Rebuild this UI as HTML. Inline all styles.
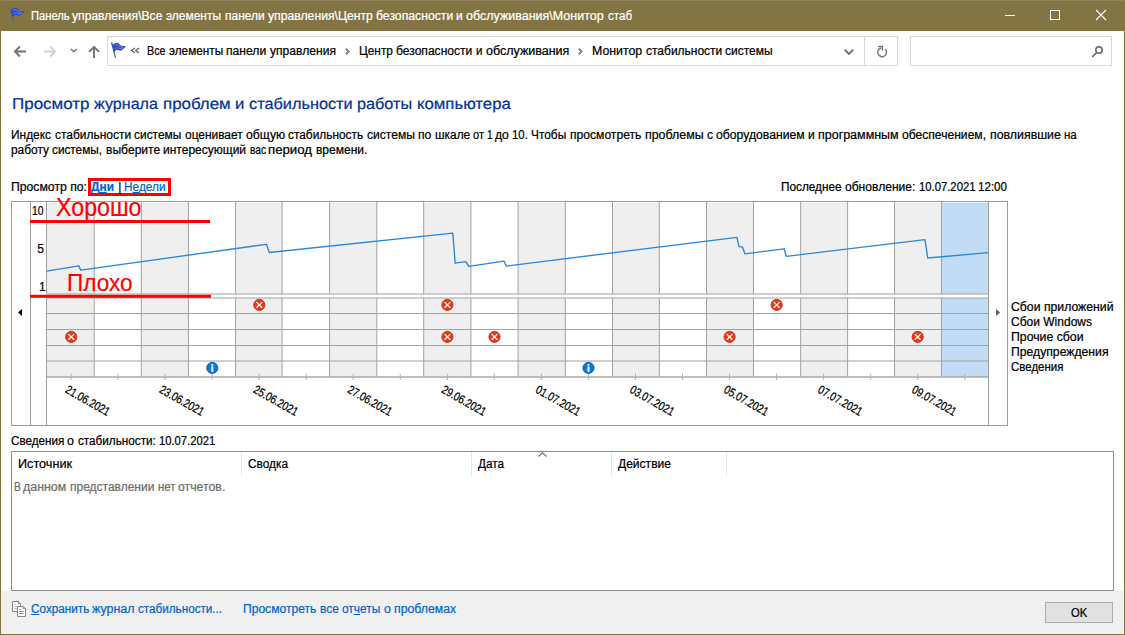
<!DOCTYPE html>
<html lang="ru"><head><meta charset="utf-8"><title>Монитор стабильности системы</title>
<style>
html,body{margin:0;padding:0;}
body{width:1125px;height:635px;overflow:hidden;background:#fff;font-family:"Liberation Sans", sans-serif;font-size:12px;position:relative;}
.abs{position:absolute;box-sizing:border-box;}
.t{position:absolute;white-space:nowrap;transform-origin:0 0;display:block;-webkit-text-stroke:0.22px currentColor;}
.t u{text-decoration-thickness:1px;text-underline-offset:1px;}
#win{left:0;top:0;width:1125px;height:635px;border:1px solid #85743f;border-top:none;}
#titlebar{left:0;top:0;width:1125px;height:31px;background:#837443;border-top:1px solid #91835a;}
#addr{left:107px;top:36px;width:791px;height:30px;border:1px solid #d9d9d9;background:#fff;}
#addrsep{left:864px;top:37px;width:1px;height:28px;background:#d9d9d9;}
#search{left:910px;top:36px;width:202px;height:30px;border:1px solid #d9d9d9;background:#fff;}
#list{left:11px;top:451px;width:1103px;height:140px;border:1px solid #8e8e8e;background:#fff;}
.hs{position:absolute;top:452px;width:1px;height:24px;background:#e5e5e5;}
#footer{left:1px;top:591px;width:1123px;height:43px;background:#f0f0f0;}
#okbtn{left:1045px;top:602px;width:68px;height:21px;border:1px solid #adadad;background:#e1e1e1;}
</style></head>
<body>
<div class="abs" id="titlebar"></div>
<div class="abs" id="addr"></div><div class="abs" id="addrsep"></div>
<div class="abs" id="search"></div>
<div class="abs" id="list"></div>
<div class="hs" style="left:241px"></div><div class="hs" style="left:471px"></div><div class="hs" style="left:611px"></div><div class="hs" style="left:726px"></div>
<div class="abs" id="footer"></div>
<div class="abs" id="okbtn"></div>
<svg id="chart" width="1125" height="635" viewBox="0 0 1125 635" style="position:absolute;left:0;top:0">
<rect x="46.50" y="202.6" width="47.70" height="174.4" fill="#efefef"/>
<rect x="141.30" y="202.6" width="47.10" height="174.4" fill="#efefef"/>
<rect x="235.60" y="202.6" width="46.50" height="174.4" fill="#efefef"/>
<rect x="329.60" y="202.6" width="47.20" height="174.4" fill="#efefef"/>
<rect x="423.70" y="202.6" width="47.20" height="174.4" fill="#efefef"/>
<rect x="518.10" y="202.6" width="47.20" height="174.4" fill="#efefef"/>
<rect x="612.50" y="202.6" width="46.80" height="174.4" fill="#efefef"/>
<rect x="706.50" y="202.6" width="47.00" height="174.4" fill="#efefef"/>
<rect x="800.70" y="202.6" width="46.90" height="174.4" fill="#efefef"/>
<rect x="894.50" y="202.6" width="47.00" height="174.4" fill="#efefef"/>
<rect x="941.50" y="202.6" width="47.00" height="174.4" fill="#c1dcf4"/>
<rect x="46.70" y="294" width="941.80" height="4" fill="#ffffff"/>
<line x1="46.50" y1="202" x2="46.50" y2="294" stroke="#a2a2a2" stroke-width="1"/>
<line x1="46.50" y1="298" x2="46.50" y2="377" stroke="#a2a2a2" stroke-width="1"/>
<line x1="94.20" y1="202" x2="94.20" y2="294" stroke="#a2a2a2" stroke-width="1"/>
<line x1="94.20" y1="298" x2="94.20" y2="377" stroke="#a2a2a2" stroke-width="1"/>
<line x1="141.30" y1="202" x2="141.30" y2="294" stroke="#a2a2a2" stroke-width="1"/>
<line x1="141.30" y1="298" x2="141.30" y2="377" stroke="#a2a2a2" stroke-width="1"/>
<line x1="188.40" y1="202" x2="188.40" y2="294" stroke="#a2a2a2" stroke-width="1"/>
<line x1="188.40" y1="298" x2="188.40" y2="377" stroke="#a2a2a2" stroke-width="1"/>
<line x1="235.60" y1="202" x2="235.60" y2="294" stroke="#a2a2a2" stroke-width="1"/>
<line x1="235.60" y1="298" x2="235.60" y2="377" stroke="#a2a2a2" stroke-width="1"/>
<line x1="282.10" y1="202" x2="282.10" y2="294" stroke="#a2a2a2" stroke-width="1"/>
<line x1="282.10" y1="298" x2="282.10" y2="377" stroke="#a2a2a2" stroke-width="1"/>
<line x1="329.60" y1="202" x2="329.60" y2="294" stroke="#a2a2a2" stroke-width="1"/>
<line x1="329.60" y1="298" x2="329.60" y2="377" stroke="#a2a2a2" stroke-width="1"/>
<line x1="376.80" y1="202" x2="376.80" y2="294" stroke="#a2a2a2" stroke-width="1"/>
<line x1="376.80" y1="298" x2="376.80" y2="377" stroke="#a2a2a2" stroke-width="1"/>
<line x1="423.70" y1="202" x2="423.70" y2="294" stroke="#a2a2a2" stroke-width="1"/>
<line x1="423.70" y1="298" x2="423.70" y2="377" stroke="#a2a2a2" stroke-width="1"/>
<line x1="470.90" y1="202" x2="470.90" y2="294" stroke="#a2a2a2" stroke-width="1"/>
<line x1="470.90" y1="298" x2="470.90" y2="377" stroke="#a2a2a2" stroke-width="1"/>
<line x1="518.10" y1="202" x2="518.10" y2="294" stroke="#a2a2a2" stroke-width="1"/>
<line x1="518.10" y1="298" x2="518.10" y2="377" stroke="#a2a2a2" stroke-width="1"/>
<line x1="565.30" y1="202" x2="565.30" y2="294" stroke="#a2a2a2" stroke-width="1"/>
<line x1="565.30" y1="298" x2="565.30" y2="377" stroke="#a2a2a2" stroke-width="1"/>
<line x1="612.50" y1="202" x2="612.50" y2="294" stroke="#a2a2a2" stroke-width="1"/>
<line x1="612.50" y1="298" x2="612.50" y2="377" stroke="#a2a2a2" stroke-width="1"/>
<line x1="659.30" y1="202" x2="659.30" y2="294" stroke="#a2a2a2" stroke-width="1"/>
<line x1="659.30" y1="298" x2="659.30" y2="377" stroke="#a2a2a2" stroke-width="1"/>
<line x1="706.50" y1="202" x2="706.50" y2="294" stroke="#a2a2a2" stroke-width="1"/>
<line x1="706.50" y1="298" x2="706.50" y2="377" stroke="#a2a2a2" stroke-width="1"/>
<line x1="753.50" y1="202" x2="753.50" y2="294" stroke="#a2a2a2" stroke-width="1"/>
<line x1="753.50" y1="298" x2="753.50" y2="377" stroke="#a2a2a2" stroke-width="1"/>
<line x1="800.70" y1="202" x2="800.70" y2="294" stroke="#a2a2a2" stroke-width="1"/>
<line x1="800.70" y1="298" x2="800.70" y2="377" stroke="#a2a2a2" stroke-width="1"/>
<line x1="847.60" y1="202" x2="847.60" y2="294" stroke="#a2a2a2" stroke-width="1"/>
<line x1="847.60" y1="298" x2="847.60" y2="377" stroke="#a2a2a2" stroke-width="1"/>
<line x1="894.50" y1="202" x2="894.50" y2="294" stroke="#a2a2a2" stroke-width="1"/>
<line x1="894.50" y1="298" x2="894.50" y2="377" stroke="#a2a2a2" stroke-width="1"/>
<line x1="941.50" y1="202" x2="941.50" y2="294" stroke="#a2a2a2" stroke-width="1"/>
<line x1="941.50" y1="298" x2="941.50" y2="377" stroke="#a2a2a2" stroke-width="1"/>
<line x1="46.70" y1="294" x2="988.50" y2="294" stroke="#a0a0a0" stroke-width="1"/>
<line x1="46.70" y1="298" x2="988.50" y2="298" stroke="#a0a0a0" stroke-width="1"/>
<line x1="46.70" y1="313.5" x2="988.50" y2="313.5" stroke="#a2a2a2" stroke-width="1"/>
<line x1="46.70" y1="329.5" x2="988.50" y2="329.5" stroke="#a2a2a2" stroke-width="1"/>
<line x1="46.70" y1="345.5" x2="988.50" y2="345.5" stroke="#a2a2a2" stroke-width="1"/>
<line x1="46.70" y1="361.0" x2="988.50" y2="361.0" stroke="#a2a2a2" stroke-width="1"/>
<line x1="46.70" y1="377" x2="988.50" y2="377" stroke="#a8a8a8" stroke-width="1.5"/>
<line x1="71.00" y1="373.7" x2="71.00" y2="380" stroke="#b2b2b2" stroke-width="1"/>
<line x1="118.04" y1="373.7" x2="118.04" y2="380" stroke="#b2b2b2" stroke-width="1"/>
<line x1="165.08" y1="373.7" x2="165.08" y2="380" stroke="#b2b2b2" stroke-width="1"/>
<line x1="212.12" y1="373.7" x2="212.12" y2="380" stroke="#b2b2b2" stroke-width="1"/>
<line x1="259.16" y1="373.7" x2="259.16" y2="380" stroke="#b2b2b2" stroke-width="1"/>
<line x1="306.20" y1="373.7" x2="306.20" y2="380" stroke="#b2b2b2" stroke-width="1"/>
<line x1="353.24" y1="373.7" x2="353.24" y2="380" stroke="#b2b2b2" stroke-width="1"/>
<line x1="400.28" y1="373.7" x2="400.28" y2="380" stroke="#b2b2b2" stroke-width="1"/>
<line x1="447.32" y1="373.7" x2="447.32" y2="380" stroke="#b2b2b2" stroke-width="1"/>
<line x1="494.36" y1="373.7" x2="494.36" y2="380" stroke="#b2b2b2" stroke-width="1"/>
<line x1="541.40" y1="373.7" x2="541.40" y2="380" stroke="#b2b2b2" stroke-width="1"/>
<line x1="588.44" y1="373.7" x2="588.44" y2="380" stroke="#b2b2b2" stroke-width="1"/>
<line x1="635.48" y1="373.7" x2="635.48" y2="380" stroke="#b2b2b2" stroke-width="1"/>
<line x1="682.52" y1="373.7" x2="682.52" y2="380" stroke="#b2b2b2" stroke-width="1"/>
<line x1="729.56" y1="373.7" x2="729.56" y2="380" stroke="#b2b2b2" stroke-width="1"/>
<line x1="776.60" y1="373.7" x2="776.60" y2="380" stroke="#b2b2b2" stroke-width="1"/>
<line x1="823.64" y1="373.7" x2="823.64" y2="380" stroke="#b2b2b2" stroke-width="1"/>
<line x1="870.68" y1="373.7" x2="870.68" y2="380" stroke="#b2b2b2" stroke-width="1"/>
<line x1="917.72" y1="373.7" x2="917.72" y2="380" stroke="#b2b2b2" stroke-width="1"/>
<line x1="964.76" y1="373.7" x2="964.76" y2="380" stroke="#b2b2b2" stroke-width="1"/>
<rect x="11.5" y="201.5" width="996" height="224" fill="none" stroke="#9d9d9d" stroke-width="1"/>
<line x1="30.5" y1="202" x2="30.5" y2="425" stroke="#9d9d9d" stroke-width="1"/>
<line x1="46.5" y1="377" x2="46.5" y2="425" stroke="#9d9d9d" stroke-width="1"/>
<line x1="988.5" y1="202" x2="988.5" y2="425" stroke="#9f9f9f" stroke-width="1"/>
<path d="M18 312.5 L22 309 L22 316 Z" fill="#000"/>
<path d="M1000.2 312.4 L996 308.9 L996 315.9 Z" fill="#666"/>
<polyline fill="none" stroke="#2787dc" stroke-width="1.35" stroke-linejoin="round" points="46.8,271.2 78.8,265.9 80.7,270.1 266.5,244.3 269.2,252.5 452.8,233.1 455.2,263.2 465.9,261.6 468.8,266.4 504,261.1 506.1,266.1 736.9,237.3 739,246.7 742.5,247.2 745,253.9 784.1,248.8 786.3,256.3 925,239.6 927.7,258 988,252.7"/>
<g transform="translate(259.3,304.9)"><circle r="5.6" fill="#e93a1c" stroke="#c42f14" stroke-width="0.9"/><path d="M-2.6 -2.6 L2.6 2.6 M2.6 -2.6 L-2.6 2.6" stroke="#fff" stroke-width="1.15" stroke-linecap="round"/></g>
<g transform="translate(447.4,304.9)"><circle r="5.6" fill="#e93a1c" stroke="#c42f14" stroke-width="0.9"/><path d="M-2.6 -2.6 L2.6 2.6 M2.6 -2.6 L-2.6 2.6" stroke="#fff" stroke-width="1.15" stroke-linecap="round"/></g>
<g transform="translate(776.7,304.9)"><circle r="5.6" fill="#e93a1c" stroke="#c42f14" stroke-width="0.9"/><path d="M-2.6 -2.6 L2.6 2.6 M2.6 -2.6 L-2.6 2.6" stroke="#fff" stroke-width="1.15" stroke-linecap="round"/></g>
<g transform="translate(71.2,336.9)"><circle r="5.6" fill="#e93a1c" stroke="#c42f14" stroke-width="0.9"/><path d="M-2.6 -2.6 L2.6 2.6 M2.6 -2.6 L-2.6 2.6" stroke="#fff" stroke-width="1.15" stroke-linecap="round"/></g>
<g transform="translate(447.4,336.9)"><circle r="5.6" fill="#e93a1c" stroke="#c42f14" stroke-width="0.9"/><path d="M-2.6 -2.6 L2.6 2.6 M2.6 -2.6 L-2.6 2.6" stroke="#fff" stroke-width="1.15" stroke-linecap="round"/></g>
<g transform="translate(494.5,336.9)"><circle r="5.6" fill="#e93a1c" stroke="#c42f14" stroke-width="0.9"/><path d="M-2.6 -2.6 L2.6 2.6 M2.6 -2.6 L-2.6 2.6" stroke="#fff" stroke-width="1.15" stroke-linecap="round"/></g>
<g transform="translate(729.6,336.9)"><circle r="5.6" fill="#e93a1c" stroke="#c42f14" stroke-width="0.9"/><path d="M-2.6 -2.6 L2.6 2.6 M2.6 -2.6 L-2.6 2.6" stroke="#fff" stroke-width="1.15" stroke-linecap="round"/></g>
<g transform="translate(917.7,336.9)"><circle r="5.6" fill="#e93a1c" stroke="#c42f14" stroke-width="0.9"/><path d="M-2.6 -2.6 L2.6 2.6 M2.6 -2.6 L-2.6 2.6" stroke="#fff" stroke-width="1.15" stroke-linecap="round"/></g>
<g transform="translate(212.3,367.9)"><circle r="5.6" fill="#0a78d6" stroke="#0a5cab" stroke-width="0.9"/><rect x="-1.05" y="-3.8" width="2.1" height="1.5" fill="#fff"/><rect x="-1.05" y="-1.5" width="2.1" height="5.3" fill="#fff"/></g>
<g transform="translate(588.5,367.9)"><circle r="5.6" fill="#0a78d6" stroke="#0a5cab" stroke-width="0.9"/><rect x="-1.05" y="-3.8" width="2.1" height="1.5" fill="#fff"/><rect x="-1.05" y="-1.5" width="2.1" height="5.3" fill="#fff"/></g>
<text transform="translate(64.5,392.0) rotate(29.6)" font-family='"Liberation Sans", sans-serif' font-size="12" fill="#000" stroke="#000" stroke-width="0.25" textLength="49" lengthAdjust="spacingAndGlyphs">21.06.2021</text>
<text transform="translate(158.6,392.0) rotate(29.6)" font-family='"Liberation Sans", sans-serif' font-size="12" fill="#000" stroke="#000" stroke-width="0.25" textLength="49" lengthAdjust="spacingAndGlyphs">23.06.2021</text>
<text transform="translate(252.6,392.0) rotate(29.6)" font-family='"Liberation Sans", sans-serif' font-size="12" fill="#000" stroke="#000" stroke-width="0.25" textLength="49" lengthAdjust="spacingAndGlyphs">25.06.2021</text>
<text transform="translate(346.7,392.0) rotate(29.6)" font-family='"Liberation Sans", sans-serif' font-size="12" fill="#000" stroke="#000" stroke-width="0.25" textLength="49" lengthAdjust="spacingAndGlyphs">27.06.2021</text>
<text transform="translate(440.7,392.0) rotate(29.6)" font-family='"Liberation Sans", sans-serif' font-size="12" fill="#000" stroke="#000" stroke-width="0.25" textLength="49" lengthAdjust="spacingAndGlyphs">29.06.2021</text>
<text transform="translate(534.8,392.0) rotate(29.6)" font-family='"Liberation Sans", sans-serif' font-size="12" fill="#000" stroke="#000" stroke-width="0.25" textLength="49" lengthAdjust="spacingAndGlyphs">01.07.2021</text>
<text transform="translate(628.9,392.0) rotate(29.6)" font-family='"Liberation Sans", sans-serif' font-size="12" fill="#000" stroke="#000" stroke-width="0.25" textLength="49" lengthAdjust="spacingAndGlyphs">03.07.2021</text>
<text transform="translate(722.9,392.0) rotate(29.6)" font-family='"Liberation Sans", sans-serif' font-size="12" fill="#000" stroke="#000" stroke-width="0.25" textLength="49" lengthAdjust="spacingAndGlyphs">05.07.2021</text>
<text transform="translate(817.0,392.0) rotate(29.6)" font-family='"Liberation Sans", sans-serif' font-size="12" fill="#000" stroke="#000" stroke-width="0.25" textLength="49" lengthAdjust="spacingAndGlyphs">07.07.2021</text>
<text transform="translate(911.0,392.0) rotate(29.6)" font-family='"Liberation Sans", sans-serif' font-size="12" fill="#000" stroke="#000" stroke-width="0.25" textLength="49" lengthAdjust="spacingAndGlyphs">09.07.2021</text>
<rect x="30" y="220" width="180" height="3" fill="#ff0000"/>
<rect x="30" y="294.8" width="181" height="3" fill="#ff0000"/>
<rect x="89.5" y="179.5" width="80" height="15" fill="none" stroke="#ff0000" stroke-width="3"/>
</svg>
<svg id="icons" width="1125" height="635" viewBox="0 0 1125 635" style="position:absolute;left:0;top:0">
<g transform="translate(9,7)"><path d="M1.3 1.3 L4.9 15.3" stroke="#5a6675" stroke-width="1.3" stroke-linecap="round" fill="none"/>
<circle cx="1.2" cy="1.2" r="0.95" fill="#6b7682"/>
<path d="M1.7 2.7 C3.5 1.9 5 0.4 6.8 0.7 C8.6 1.0 9.2 3.2 11 3.8 C12.4 4.3 14 4.1 15.6 4.3 C14 5.8 12.6 7.7 10.8 8.5 C9 9.1 7.8 7.7 6.2 8.1 C5 8.4 4.2 9.5 3.7 10.4 Z" fill="#2943c9"/>
<path d="M3.6 3.6 C5.2 2.4 6.8 2.2 8.2 3.6 C9.4 4.8 10.8 5.2 12.6 5.2 M4.4 6.6 C6 5.4 7.4 5.6 8.8 6.4 C9.8 7 10.8 7 11.8 6.6" stroke="#8496e4" stroke-width="0.9" fill="none" stroke-linecap="round"/></g>
<g transform="translate(110.5,42)"><path d="M1.3 1.3 L4.9 15.3" stroke="#5a6675" stroke-width="1.3" stroke-linecap="round" fill="none"/>
<circle cx="1.2" cy="1.2" r="0.95" fill="#6b7682"/>
<path d="M1.7 2.7 C3.5 1.9 5 0.4 6.8 0.7 C8.6 1.0 9.2 3.2 11 3.8 C12.4 4.3 14 4.1 15.6 4.3 C14 5.8 12.6 7.7 10.8 8.5 C9 9.1 7.8 7.7 6.2 8.1 C5 8.4 4.2 9.5 3.7 10.4 Z" fill="#2943c9"/>
<path d="M3.6 3.6 C5.2 2.4 6.8 2.2 8.2 3.6 C9.4 4.8 10.8 5.2 12.6 5.2 M4.4 6.6 C6 5.4 7.4 5.6 8.8 6.4 C9.8 7 10.8 7 11.8 6.6" stroke="#8496e4" stroke-width="0.9" fill="none" stroke-linecap="round"/></g>
<path d="M1005 15.5 H1015" stroke="#fff" stroke-width="1"/>
<rect x="1050.5" y="10.5" width="9" height="9" fill="none" stroke="#fff" stroke-width="1"/>
<path d="M1096 10 L1106 20 M1106 10 L1096 20" stroke="#fff" stroke-width="1.1"/>
<path d="M26 51.5 H15.4 M19.9 46.5 L14.9 51.5 L19.9 56.5" stroke="#737373" stroke-width="1.9" fill="none"/>
<path d="M44 51.5 H54.6 M50.1 46.5 L55.1 51.5 L50.1 56.5" stroke="#d2d2d2" stroke-width="1.9" fill="none"/>
<path d="M71 49 L73.8 51.8 L76.6 49" stroke="#737373" stroke-width="1.5" fill="none"/>
<path d="M94 58 V47.4 M89 51.9 L94 46.9 L99 51.9" stroke="#737373" stroke-width="1.9" fill="none"/>
<path d="M134.9 47.9 L131.5 50.4 L134.9 52.9 M139 47.9 L135.6 50.4 L139 52.9" stroke="#606060" stroke-width="1.25" fill="none"/>
<path d="M345.9 48.7 L348.7 51.5 L345.9 54.3" stroke="#7c7c7c" stroke-width="1.8" fill="none"/>
<path d="M578.7 48.7 L581.5 51.5 L578.7 54.3" stroke="#7c7c7c" stroke-width="1.8" fill="none"/>
<path d="M844.6 49.7 L848.9 54 L853.2 49.7" stroke="#6e6e6e" stroke-width="1.8" fill="none"/>
<path d="M885.2 49.2 A4.4 4.4 0 1 1 881.2 48" stroke="#737373" stroke-width="1.4" fill="none"/><path d="M878.2 46.5 H882.5 V50.8" stroke="#737373" stroke-width="1.3" fill="none"/>
<circle cx="1099" cy="50" r="3.2" stroke="#707070" stroke-width="1.7" fill="none"/><path d="M1096.6 52.6 L1092.2 57" stroke="#6f6f6f" stroke-width="1.7"/>
<path d="M538.5 456.5 L542.5 452.8 L546.5 456.5" stroke="#707070" stroke-width="1.1" fill="none"/>
<g stroke="#878787" stroke-width="1" fill="#fff" stroke-linejoin="miter"><path d="M12.5 601.5 H18.3 L20.5 603.7 V611.5 H12.5 Z"/><path d="M18.3 601.5 V603.7 H20.5" fill="none"/>
<path d="M14.3 604.5 H15.8 M14.3 606.5 H17.6 M14.3 608.5 H17" stroke="#a9c8f5" fill="none"/>
<path d="M17.5 606.5 H23.3 L25.5 608.7 V616.5 H17.5 Z"/><path d="M23.3 606.5 V608.7 H25.5" fill="none"/>
<path d="M19.2 609.5 H20.8 M19.2 611.5 H23.8 M19.2 613.5 H23.8" stroke="#5c94f0" fill="none"/></g>
</svg>
<span class="t" id="title_0" style="left:30.6px;top:10.0px;font-size:12px;line-height:12px;color:#ffffff;font-weight:400;transform:scale(0.9331,1.0);white-space:pre;">Панель </span>
<span class="t" id="title_1" style="left:72.4px;top:10.0px;font-size:12px;line-height:12px;color:#ffffff;font-weight:400;transform:scale(1.0108,1.0);white-space:pre;">управления\Все </span>
<span class="t" id="title_2" style="left:166.2px;top:10.0px;font-size:12px;line-height:12px;color:#ffffff;font-weight:400;transform:scale(0.9958,1.0);white-space:pre;">элементы </span>
<span class="t" id="title_3" style="left:224.5px;top:10.0px;font-size:12px;line-height:12px;color:#ffffff;font-weight:400;transform:scale(0.9971,1.0);white-space:pre;">панели </span>
<span class="t" id="title_4" style="left:267.5px;top:10.0px;font-size:12px;line-height:12px;color:#ffffff;font-weight:400;transform:scale(1.0172,1.0);white-space:pre;">управления\Центр </span>
<span class="t" id="title_5" style="left:375.8px;top:10.0px;font-size:12px;line-height:12px;color:#ffffff;font-weight:400;transform:scale(1.0176,1.0);white-space:pre;">безопасности </span>
<span class="t" id="title_6" style="left:456.4px;top:10.0px;font-size:12px;line-height:12px;color:#ffffff;font-weight:400;transform:scale(0.9953,1.0);white-space:pre;">и </span>
<span class="t" id="title_7" style="left:466.4px;top:10.0px;font-size:12px;line-height:12px;color:#ffffff;font-weight:400;transform:scale(1.0410,1.0);white-space:pre;">обслуживания\Монитор </span>
<span class="t" id="title_8" style="left:607.5px;top:10.0px;font-size:12px;line-height:12px;color:#ffffff;font-weight:400;transform:scale(0.9710,1.0);white-space:pre;">стаб</span>
<span class="t" id="a1_0" style="left:147.0px;top:45.0px;font-size:12px;line-height:12px;color:#000;font-weight:400;transform:scale(0.8994,1.0);white-space:pre;">Все </span>
<span class="t" id="a1_1" style="left:168.6px;top:45.0px;font-size:12px;line-height:12px;color:#000;font-weight:400;transform:scale(0.9804,1.0);white-space:pre;">элементы </span>
<span class="t" id="a1_2" style="left:226.0px;top:45.0px;font-size:12px;line-height:12px;color:#000;font-weight:400;transform:scale(1.0110,1.0);white-space:pre;">панели </span>
<span class="t" id="a1_3" style="left:269.6px;top:45.0px;font-size:12px;line-height:12px;color:#000;font-weight:400;transform:scale(1.0084,1.0);white-space:pre;">управления</span>
<span class="t" id="a2_0" style="left:358.9px;top:45.0px;font-size:12px;line-height:12px;color:#000;font-weight:400;transform:scale(0.9871,1.0);white-space:pre;">Центр </span>
<span class="t" id="a2_1" style="left:396.1px;top:45.0px;font-size:12px;line-height:12px;color:#000;font-weight:400;transform:scale(1.0063,1.0);white-space:pre;">безопасности </span>
<span class="t" id="a2_2" style="left:475.8px;top:45.0px;font-size:12px;line-height:12px;color:#000;font-weight:400;transform:scale(0.9655,1.0);white-space:pre;">и </span>
<span class="t" id="a2_3" style="left:485.5px;top:45.0px;font-size:12px;line-height:12px;color:#000;font-weight:400;transform:scale(1.0408,1.0);white-space:pre;">обслуживания</span>
<span class="t" id="a3_0" style="left:592.1px;top:45.0px;font-size:12px;line-height:12px;color:#000;font-weight:400;transform:scale(1.0251,1.0);white-space:pre;">Монитор </span>
<span class="t" id="a3_1" style="left:645.6px;top:45.0px;font-size:12px;line-height:12px;color:#000;font-weight:400;transform:scale(0.9987,1.0);white-space:pre;">стабильности </span>
<span class="t" id="a3_2" style="left:725.2px;top:45.0px;font-size:12px;line-height:12px;color:#000;font-weight:400;transform:scale(0.9995,1.0);white-space:pre;">системы</span>
<span class="t" id="h1_0" style="left:11.9px;top:96.69px;font-size:15.6px;line-height:15.6px;color:#003399;font-weight:400;transform:scale(1.0892,1.0);white-space:pre;text-rendering:geometricPrecision;">Просмотр </span>
<span class="t" id="h1_1" style="left:94.2px;top:96.69px;font-size:15.6px;line-height:15.6px;color:#003399;font-weight:400;transform:scale(1.0317,1.0);white-space:pre;text-rendering:geometricPrecision;">журнала </span>
<span class="t" id="h1_2" style="left:162.6px;top:96.69px;font-size:15.6px;line-height:15.6px;color:#003399;font-weight:400;transform:scale(1.0814,1.0);white-space:pre;text-rendering:geometricPrecision;">проблем </span>
<span class="t" id="h1_3" style="left:234.9px;top:96.69px;font-size:15.6px;line-height:15.6px;color:#003399;font-weight:400;transform:scale(1.0731,1.0);white-space:pre;text-rendering:geometricPrecision;">и </span>
<span class="t" id="h1_4" style="left:248.9px;top:96.69px;font-size:15.6px;line-height:15.6px;color:#003399;font-weight:400;transform:scale(1.0446,1.0);white-space:pre;text-rendering:geometricPrecision;">стабильности </span>
<span class="t" id="h1_5" style="left:357.1px;top:96.69px;font-size:15.6px;line-height:15.6px;color:#003399;font-weight:400;transform:scale(1.0402,1.0);white-space:pre;text-rendering:geometricPrecision;">работы </span>
<span class="t" id="h1_6" style="left:416.7px;top:96.69px;font-size:15.6px;line-height:15.6px;color:#003399;font-weight:400;transform:scale(1.0745,1.0);white-space:pre;text-rendering:geometricPrecision;">компьютера</span>
<span class="t" id="p1_0" style="left:11.1px;top:129.0px;font-size:12px;line-height:12px;color:#000;font-weight:400;transform:scale(0.9941,1.0);white-space:pre;">Индекс </span>
<span class="t" id="p1_1" style="left:54.5px;top:129.0px;font-size:12px;line-height:12px;color:#000;font-weight:400;transform:scale(0.9975,1.0);white-space:pre;">стабильности </span>
<span class="t" id="p1_2" style="left:134.0px;top:129.0px;font-size:12px;line-height:12px;color:#000;font-weight:400;transform:scale(0.9950,1.0);white-space:pre;">системы </span>
<span class="t" id="p1_3" style="left:184.7px;top:129.0px;font-size:12px;line-height:12px;color:#000;font-weight:400;transform:scale(0.9929,1.0);white-space:pre;">оценивает </span>
<span class="t" id="p1_4" style="left:245.7px;top:129.0px;font-size:12px;line-height:12px;color:#000;font-weight:400;transform:scale(1.0145,1.0);white-space:pre;">общую </span>
<span class="t" id="p1_5" style="left:288.2px;top:129.0px;font-size:12px;line-height:12px;color:#000;font-weight:400;transform:scale(0.9905,1.0);white-space:pre;">стабильность </span>
<span class="t" id="p1_6" style="left:366.7px;top:129.0px;font-size:12px;line-height:12px;color:#000;font-weight:400;transform:scale(1.0048,1.0);white-space:pre;">системы </span>
<span class="t" id="p1_7" style="left:417.9px;top:129.0px;font-size:12px;line-height:12px;color:#000;font-weight:400;transform:scale(1.0112,1.0);white-space:pre;">по </span>
<span class="t" id="p1_8" style="left:434.6px;top:129.0px;font-size:12px;line-height:12px;color:#000;font-weight:400;transform:scale(0.9915,1.0);white-space:pre;">шкале </span>
<span class="t" id="p1_9" style="left:473.1px;top:129.0px;font-size:12px;line-height:12px;color:#000;font-weight:400;transform:scale(0.9180,1.0);white-space:pre;">от </span>
<span class="t" id="p1_10" style="left:487.1px;top:129.0px;font-size:12px;line-height:12px;color:#000;font-weight:400;transform:scale(0.8500,1.0);white-space:pre;">1 </span>
<span class="t" id="p1_11" style="left:495.2px;top:129.0px;font-size:12px;line-height:12px;color:#000;font-weight:400;transform:scale(1.0108,1.0);white-space:pre;">до </span>
<span class="t" id="p1_12" style="left:512.4px;top:129.0px;font-size:12px;line-height:12px;color:#000;font-weight:400;transform:scale(0.9493,1.0);white-space:pre;">10. </span>
<span class="t" id="p1_13" style="left:531.4px;top:129.0px;font-size:12px;line-height:12px;color:#000;font-weight:400;transform:scale(0.9904,1.0);white-space:pre;">Чтобы </span>
<span class="t" id="p1_14" style="left:569.9px;top:129.0px;font-size:12px;line-height:12px;color:#000;font-weight:400;transform:scale(1.0088,1.0);white-space:pre;">просмотреть </span>
<span class="t" id="p1_15" style="left:644.6px;top:129.0px;font-size:12px;line-height:12px;color:#000;font-weight:400;transform:scale(1.0337,1.0);white-space:pre;">проблемы </span>
<span class="t" id="p1_16" style="left:706.7px;top:129.0px;font-size:12px;line-height:12px;color:#000;font-weight:400;transform:scale(1.0060,1.0);white-space:pre;">с </span>
<span class="t" id="p1_17" style="left:716.1px;top:129.0px;font-size:12px;line-height:12px;color:#000;font-weight:400;transform:scale(1.0172,1.0);white-space:pre;">оборудованием </span>
<span class="t" id="p1_18" style="left:808.2px;top:129.0px;font-size:12px;line-height:12px;color:#000;font-weight:400;transform:scale(1.0053,1.0);white-space:pre;">и </span>
<span class="t" id="p1_19" style="left:818.3px;top:129.0px;font-size:12px;line-height:12px;color:#000;font-weight:400;transform:scale(1.0395,1.0);white-space:pre;">программным </span>
<span class="t" id="p1_20" style="left:902.4px;top:129.0px;font-size:12px;line-height:12px;color:#000;font-weight:400;transform:scale(1.0079,1.0);white-space:pre;">обеспечением, </span>
<span class="t" id="p1_21" style="left:989.8px;top:129.0px;font-size:12px;line-height:12px;color:#000;font-weight:400;transform:scale(1.0293,1.0);white-space:pre;">повлиявшие </span>
<span class="t" id="p1_22" style="left:1064.1px;top:129.0px;font-size:12px;line-height:12px;color:#000;font-weight:400;transform:scale(0.9540,1.0);white-space:pre;">на</span>
<span class="t" id="p2_0" style="left:11.1px;top:144.0px;font-size:12px;line-height:12px;color:#000;font-weight:400;transform:scale(0.9926,1.0);white-space:pre;">работу </span>
<span class="t" id="p2_1" style="left:52.4px;top:144.0px;font-size:12px;line-height:12px;color:#000;font-weight:400;transform:scale(0.9801,1.0);white-space:pre;">системы, </span>
<span class="t" id="p2_2" style="left:105.6px;top:144.0px;font-size:12px;line-height:12px;color:#000;font-weight:400;transform:scale(1.0075,1.0);white-space:pre;">выберите </span>
<span class="t" id="p2_3" style="left:163.2px;top:144.0px;font-size:12px;line-height:12px;color:#000;font-weight:400;transform:scale(1.0008,1.0);white-space:pre;">интересующий </span>
<span class="t" id="p2_4" style="left:249.6px;top:144.0px;font-size:12px;line-height:12px;color:#000;font-weight:400;transform:scale(0.8500,1.0);white-space:pre;">вас </span>
<span class="t" id="p2_5" style="left:268.3px;top:144.0px;font-size:12px;line-height:12px;color:#000;font-weight:400;transform:scale(1.1017,1.0);white-space:pre;">период </span>
<span class="t" id="p2_6" style="left:316.0px;top:144.0px;font-size:12px;line-height:12px;color:#000;font-weight:400;transform:scale(0.9998,1.0);white-space:pre;">времени.</span>
<span class="t" id="v1" style="left:11.3px;top:181.0px;font-size:12px;line-height:12px;color:#000;font-weight:400;transform:scale(1.0180,1.0);">Просмотр по:</span>
<span class="t" id="v2" style="left:91.3px;top:181.0px;font-size:12px;line-height:12px;color:#0066cc;font-weight:700;transform:scale(0.9912,1.0);">Д<u>н</u>и</span>
<span class="t" id="v3" style="left:118.3px;top:181.0px;font-size:12px;line-height:12px;color:#000;font-weight:400;transform:scale(1.0000,1.0);">|</span>
<span class="t" id="v4" style="left:124.3px;top:181.0px;font-size:12px;line-height:12px;color:#0066cc;font-weight:400;transform:scale(0.9863,1.0);">Н<u>е</u>дели</span>
<span class="t" id="upd_0" style="left:781.1px;top:181.0px;font-size:12px;line-height:12px;color:#000;font-weight:400;transform:scale(0.9811,1.0);white-space:pre;">Последнее </span>
<span class="t" id="upd_1" style="left:844.9px;top:181.0px;font-size:12px;line-height:12px;color:#000;font-weight:400;transform:scale(1.0055,1.0);white-space:pre;">обновление: </span>
<span class="t" id="upd_2" style="left:918.6px;top:181.0px;font-size:12px;line-height:12px;color:#000;font-weight:400;transform:scale(0.9400,1.0);white-space:pre;">10.07.2021 </span>
<span class="t" id="upd_3" style="left:978.2px;top:181.0px;font-size:12px;line-height:12px;color:#000;font-weight:400;transform:scale(0.9657,1.0);white-space:pre;">12:00</span>
<span class="t" id="y10" style="left:32.3px;top:205.0px;font-size:12px;line-height:12px;color:#000;font-weight:400;transform:scale(0.8608,1.0);">10</span>
<span class="t" id="y5" style="left:37.3px;top:243.0px;font-size:12px;line-height:12px;color:#000;font-weight:400;transform:scale(1.0000,1.0);">5</span>
<span class="t" id="y1" style="left:38.9px;top:281.0px;font-size:12px;line-height:12px;color:#000;font-weight:400;transform:scale(1.0000,1.0);">1</span>
<span class="t" id="good" style="left:55.8px;top:195.1px;font-size:25px;line-height:25px;color:#ff0000;font-weight:400;transform:scale(0.9286,1.0);">Хорошо</span>
<span class="t" id="bad" style="left:67.2px;top:271.55px;font-size:23.5px;line-height:23.5px;color:#ff0000;font-weight:400;transform:scale(0.9599,1.0);">Плохо</span>
<span class="t" id="lg0" style="left:1010.8px;top:301.0px;font-size:12px;line-height:12px;color:#000;font-weight:400;transform:scale(1.0194,1.0);">Сбои приложений</span>
<span class="t" id="lg1" style="left:1010.8px;top:316.0px;font-size:12px;line-height:12px;color:#000;font-weight:400;transform:scale(1.0008,1.0);">Сбои Windows</span>
<span class="t" id="lg2" style="left:1010.8px;top:331.0px;font-size:12px;line-height:12px;color:#000;font-weight:400;transform:scale(1.0223,1.0);">Прочие сбои</span>
<span class="t" id="lg3" style="left:1010.8px;top:346.0px;font-size:12px;line-height:12px;color:#000;font-weight:400;transform:scale(1.0161,1.0);">Предупреждения</span>
<span class="t" id="lg4" style="left:1010.8px;top:361.0px;font-size:12px;line-height:12px;color:#000;font-weight:400;transform:scale(0.9575,1.0);">Сведения</span>
<span class="t" id="det_0" style="left:10.5px;top:435.0px;font-size:12px;line-height:12px;color:#000;font-weight:400;transform:scale(0.9750,1.0);white-space:pre;">Сведения </span>
<span class="t" id="det_1" style="left:67.2px;top:435.0px;font-size:12px;line-height:12px;color:#000;font-weight:400;transform:scale(1.0384,1.0);white-space:pre;">о </span>
<span class="t" id="det_2" style="left:77.6px;top:435.0px;font-size:12px;line-height:12px;color:#000;font-weight:400;transform:scale(0.9766,1.0);white-space:pre;">стабильности: </span>
<span class="t" id="det_3" style="left:158.7px;top:435.0px;font-size:12px;line-height:12px;color:#000;font-weight:400;transform:scale(0.9357,1.0);white-space:pre;">10.07.2021</span>
<span class="t" id="c1" style="left:18.1px;top:458.0px;font-size:12px;line-height:12px;color:#000;font-weight:400;transform:scale(1.0540,1.0);">Источник</span>
<span class="t" id="c2" style="left:248.1px;top:458.0px;font-size:12px;line-height:12px;color:#000;font-weight:400;transform:scale(0.9873,1.0);">Сводка</span>
<span class="t" id="c3" style="left:478.2px;top:458.0px;font-size:12px;line-height:12px;color:#000;font-weight:400;transform:scale(0.9782,1.0);">Дата</span>
<span class="t" id="c4" style="left:618.3px;top:458.0px;font-size:12px;line-height:12px;color:#000;font-weight:400;transform:scale(1.0044,1.0);">Действие</span>
<span class="t" id="none_0" style="left:14.3px;top:480.5px;font-size:12px;line-height:12px;color:#6d6d6d;font-weight:400;transform:scale(0.8500,1.0);white-space:pre;">В </span>
<span class="t" id="none_1" style="left:23.2px;top:480.5px;font-size:12px;line-height:12px;color:#6d6d6d;font-weight:400;transform:scale(1.0335,1.0);white-space:pre;">данном </span>
<span class="t" id="none_2" style="left:69.9px;top:480.5px;font-size:12px;line-height:12px;color:#6d6d6d;font-weight:400;transform:scale(0.9993,1.0);white-space:pre;">представлении </span>
<span class="t" id="none_3" style="left:157.6px;top:480.5px;font-size:12px;line-height:12px;color:#6d6d6d;font-weight:400;transform:scale(0.9524,1.0);white-space:pre;">нет </span>
<span class="t" id="none_4" style="left:178.3px;top:480.5px;font-size:12px;line-height:12px;color:#6d6d6d;font-weight:400;transform:scale(1.0241,1.0);white-space:pre;">отчетов.</span>
<span class="t" id="l1_0" style="left:30.5px;top:603.0px;font-size:12px;line-height:12px;color:#0066cc;font-weight:400;transform:scale(0.9780,1.0);white-space:pre;"><u>С</u>охранить </span>
<span class="t" id="l1_1" style="left:92.1px;top:603.0px;font-size:12px;line-height:12px;color:#0066cc;font-weight:400;transform:scale(1.0374,1.0);white-space:pre;">журнал </span>
<span class="t" id="l1_2" style="left:138.1px;top:603.0px;font-size:12px;line-height:12px;color:#0066cc;font-weight:400;transform:scale(0.9737,1.0);white-space:pre;">стабильности...</span>
<span class="t" id="l2_0" style="left:243.2px;top:603.0px;font-size:12px;line-height:12px;color:#0066cc;font-weight:400;transform:scale(1.0069,1.0);white-space:pre;">Просмотреть </span>
<span class="t" id="l2_1" style="left:319.9px;top:603.0px;font-size:12px;line-height:12px;color:#0066cc;font-weight:400;transform:scale(0.9978,1.0);white-space:pre;">все </span>
<span class="t" id="l2_2" style="left:342.1px;top:603.0px;font-size:12px;line-height:12px;color:#0066cc;font-weight:400;transform:scale(0.9903,1.0);white-space:pre;">от<u>ч</u>еты </span>
<span class="t" id="l2_3" style="left:383.6px;top:603.0px;font-size:12px;line-height:12px;color:#0066cc;font-weight:400;transform:scale(1.0284,1.0);white-space:pre;">о </span>
<span class="t" id="l2_4" style="left:393.9px;top:603.0px;font-size:12px;line-height:12px;color:#0066cc;font-weight:400;transform:scale(1.0217,1.0);white-space:pre;">проблемах</span>
<span class="t" id="ok" style="left:1071.3px;top:607.0px;font-size:12px;line-height:12px;color:#000;font-weight:400;transform:scale(0.9341,1.0);">OK</span>
<div class="abs" id="win"></div>
</body></html>
